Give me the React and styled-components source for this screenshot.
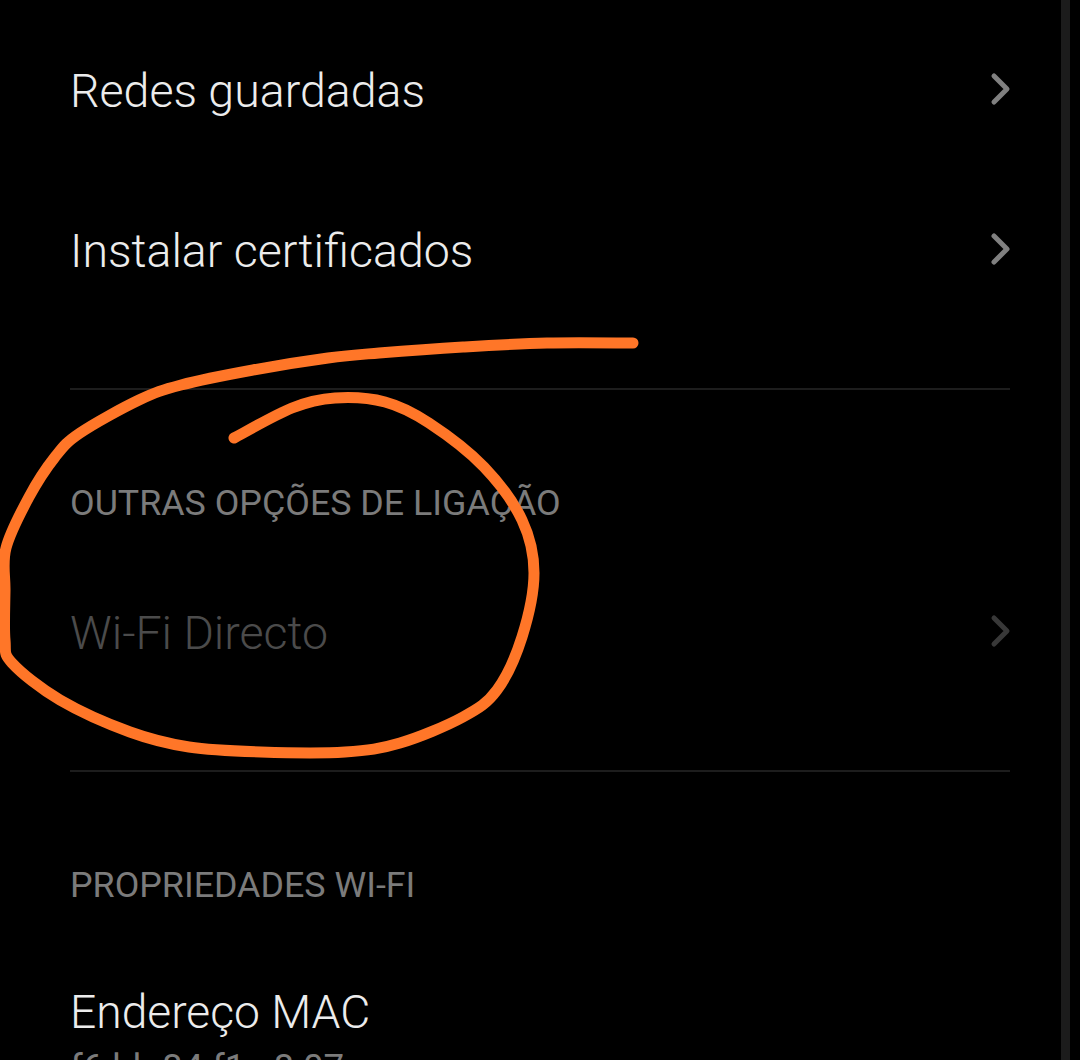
import React from "react";
import styled, { createGlobalStyle } from "styled-components";

const GlobalStyle = createGlobalStyle`
  html, body {
    margin: 0;
    background: #000;
  }
  body {
    font-family: Roboto, "Noto Sans", sans-serif;
  }
`;

const Screen = styled.div`
  position: relative;
  width: 1080px;
  height: 1060px;
  overflow: hidden;
  background: #000;
  padding: 11px 70px 0 70px;
  box-sizing: border-box;
`;

const Row = styled.div`
  height: 160px;
  display: flex;
  align-items: center;
  justify-content: space-between;
  color: ${(p) => (p.$disabled ? "#4b4b4b" : "#ececec")};
  font-size: 46.5px;
  font-weight: 300;
`;

const Chevron = styled.svg`
  width: 24px;
  height: 36px;
  margin-right: -3px;
  margin-bottom: 4px;
  fill: none;
  stroke: ${(p) => (p.$disabled ? "#383838" : "#808080")};
  stroke-width: 5;
  stroke-linecap: round;
  stroke-linejoin: round;
`;

const Divider = styled.hr`
  margin: 0;
  border: 0;
  height: 2px;
  background: #1d1d1d;
  margin-top: 57px;
`;

const SectionTitle = styled.div`
  color: #7b7b7b;
  font-size: 35.8px;
  font-weight: 400;
  line-height: 40px;
  padding-top: 93px;
  margin-bottom: 30px;
`;

const InfoRow = styled.div`
  display: flex;
  flex-direction: column;
  padding-top: 48px;
`;

const InfoLabel = styled.div`
  color: #ececec;
  font-size: 46.2px;
  font-weight: 300;
  line-height: 58px;
`;

const InfoValue = styled.div`
  color: #7b7b7b;
  font-size: 36.6px;
  line-height: 40px;
  margin-top: 7px;
`;

const ScrollEdge = styled.div`
  position: absolute;
  top: 0;
  bottom: 0;
  left: 1061px;
  width: 9px;
  background: #1c1c1c;
`;

const Scribble = styled.svg`
  position: absolute;
  top: 0;
  left: 0;
  width: 1080px;
  height: 1060px;
  fill: none;
  stroke: #ff7628;
  stroke-width: 11;
  stroke-linecap: round;
  stroke-linejoin: round;
`;

const points = [
  [633, 343], [547, 343], [463, 347], [379, 353], [328, 358], [253, 370], [181, 385],
  [139, 400], [80, 433], [55, 457], [29, 497], [6, 548], [5, 590], [5, 640], [12, 663],
  [60, 700], [130, 732], [189, 747], [261, 752], [345, 752], [400, 743], [463, 717],
  [497, 690], [522, 637], [534, 573], [522, 520], [484, 467], [429, 423], [385, 402],
  [335, 398], [292, 408], [234, 438],
];

// catmull-rom through the hand drawn points
function smooth(pts) {
  let d = `M${pts[0][0]} ${pts[0][1]}`;
  for (let i = 0; i < pts.length - 1; i++) {
    const p0 = pts[i - 1] || pts[i];
    const p1 = pts[i];
    const p2 = pts[i + 1];
    const p3 = pts[i + 2] || p2;
    const c1x = p1[0] + (p2[0] - p0[0]) / 6;
    const c1y = p1[1] + (p2[1] - p0[1]) / 6;
    const c2x = p2[0] - (p3[0] - p1[0]) / 6;
    const c2y = p2[1] - (p3[1] - p1[1]) / 6;
    d += ` C${c1x} ${c1y} ${c2x} ${c2y} ${p2[0]} ${p2[1]}`;
  }
  return d;
}

function Arrow({ disabled }) {
  return (
    <Chevron $disabled={disabled} viewBox="0 0 24 36">
      <path d="M5 5 L18 18 L5 31" />
    </Chevron>
  );
}

export default function App() {
  return (
    <Screen>
      <GlobalStyle />
      <Row>
        Redes guardadas
        <Arrow />
      </Row>
      <Row>
        Instalar certificados
        <Arrow />
      </Row>
      <Divider />
      <SectionTitle>OUTRAS OPÇÕES DE LIGAÇÃO</SectionTitle>
      <Row $disabled>
        Wi-Fi Directo
        <Arrow disabled />
      </Row>
      <Divider />
      <SectionTitle>PROPRIEDADES WI-FI</SectionTitle>
      <InfoRow>
        <InfoLabel>Endereço MAC</InfoLabel>
        <InfoValue>f6:bb:84:f1:e8:07</InfoValue>
      </InfoRow>
      <ScrollEdge />
      <Scribble viewBox="0 0 1080 1060">
        <path d={smooth(points)} />
      </Scribble>
    </Screen>
  );
}
